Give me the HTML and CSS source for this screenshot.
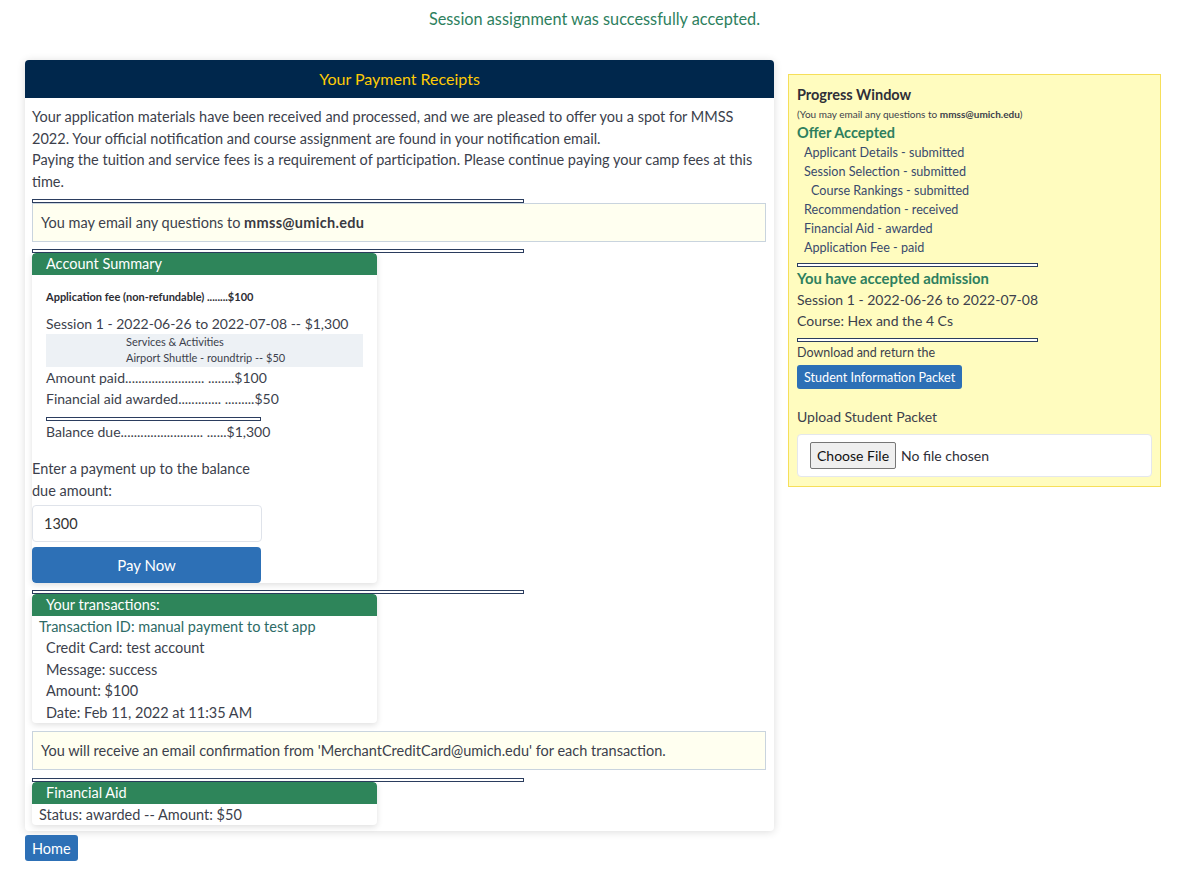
FILE: index.html
```html
<!DOCTYPE html>
<html lang="en">
<head>
<meta charset="utf-8">
<title>Your Payment Receipts</title>
<link rel="stylesheet" href="styles.css">
</head>
<body>
<div class="flash">Session assignment was successfully accepted.</div>
<div class="layout">
  <div class="main-col">
    <section class="receipts">
      <h2 class="receipts-head">Your Payment Receipts</h2>
      <div class="receipts-body">
        <p class="intro">Your application materials have been received and processed, and we are pleased to offer you a spot for MMSS 2022. Your official notification and course assignment are found in your notification email.<br>Paying the tuition and service fees is a requirement of participation. Please continue paying your camp fees at this time.</p>
        <hr class="rule">
        <div class="note">You may email any questions to <b>mmss@umich.edu</b></div>
        <hr class="rule">
        <div class="mini-card">
          <div class="mini-head">Account Summary</div>
          <div class="summary">
            <div class="app-fee">Application fee (non-refundable) ........$100</div>
            <div class="line session">Session 1 - 2022-06-26 to 2022-07-08 -- $1,300</div>
            <div class="services">
              <div>Services &amp; Activities</div>
              <div>Airport Shuttle - roundtrip -- $50</div>
            </div>
            <div class="line">Amount paid........................ ........$100</div>
            <div class="line">Financial aid awarded............. .........$50</div>
            <hr class="rule">
            <div class="line">Balance due......................... ......$1,300</div>
          </div>
          <form class="pay-form">
            <label class="pay-label" for="amt">Enter a payment up to the balance due amount:</label>
            <input id="amt" class="pay-input" type="text" value="1300">
            <button type="button" class="pay-btn">Pay Now</button>
          </form>
        </div>
        <hr class="rule">
        <div class="mini-card">
          <div class="mini-head">Your transactions:</div>
          <div class="tx">
            <div class="tx-id">Transaction ID: manual payment to test app</div>
            <div class="tx-line">Credit Card: test account</div>
            <div class="tx-line">Message: success</div>
            <div class="tx-line">Amount: $100</div>
            <div class="tx-line">Date: Feb 11, 2022 at 11:35 AM</div>
          </div>
        </div>
        <div class="note note-tx">You will receive an email confirmation from 'MerchantCreditCard@umich.edu' for each transaction.</div>
        <hr class="rule">
        <div class="mini-card">
          <div class="mini-head">Financial Aid</div>
          <div class="aid">Status: awarded -- Amount: $50</div>
        </div>
      </div>
    </section>
    <button type="button" class="home-btn">Home</button>
  </div>
  <aside class="progress">
    <div class="p-title">Progress Window</div>
    <div class="p-sub">(You may email any questions to <b>mmss@umich.edu</b>)</div>
    <div class="p-green">Offer Accepted</div>
    <ul class="p-list">
      <li>Applicant Details - submitted</li>
      <li>Session Selection - submitted</li>
      <li class="sub">Course Rankings - submitted</li>
      <li>Recommendation - received</li>
      <li>Financial Aid - awarded</li>
      <li>Application Fee - paid</li>
    </ul>
    <hr class="rule rule-first">
    <div class="p-green p-green2">You have accepted admission</div>
    <div class="p-line">Session 1 - 2022-06-26 to 2022-07-08</div>
    <div class="p-line">Course: Hex and the 4 Cs</div>
    <hr class="rule">
    <div class="p-small">Download and return the</div>
    <button type="button" class="packet-btn">Student Information Packet</button>
    <div class="p-line upload-label">Upload Student Packet</div>
    <label class="file-box"><span class="file-btn">Choose File</span><span class="file-none">No file chosen</span></label>
  </aside>
</div>
</body>
</html>
```

FILE: styles.css
```css
* { box-sizing: border-box; }
body {
  margin: 0;
  font-family: Lato, "Segoe UI", "Open Sans", sans-serif;
  font-size: 14.5px;
  color: #3c3f4c;
  background: #fff;
}
.flash {
  text-align: center;
  color: #2e7f5e;
  font-size: 16.3px;
  line-height: 22px;
  padding-top: 8px;
  height: 60px;
}
.layout {
  display: flex;
  align-items: flex-start;
  gap: 14px;
  padding-left: 25px;
}
.main-col { width: 749px; }
.receipts {
  background: #fff;
  border-radius: 4px;
  box-shadow: 0 1px 8px rgba(0,0,0,0.14);
}
.receipts-head {
  margin: 0;
  height: 38px;
  line-height: 38px;
  background: #00274c;
  color: #ffcb05;
  text-align: center;
  font-weight: normal;
  font-size: 16px;
  border-radius: 4px 4px 0 0;
}
.receipts-body { padding: 8px 8px 6px 7px; }
.intro { margin: 0 0 6px; line-height: 21.7px; font-size: 14.5px; }
.rule {
  width: 67%;
  height: 4px;
  margin: 0;
  border: 1px solid #2b3d5e;
  background: #fff;
}
.note {
  background: #fffff0;
  border: 1px solid #c9d4de;
  padding: 8px 8px;
  line-height: 21px;
  font-size: 14.5px;
  margin-bottom: 7px;
}
.note b { color: #3a3a42; letter-spacing: 0.3px; }
.note-tx { margin-top: 8px; margin-bottom: 8px; }
.mini-card {
  width: 345px;
  background: #fff;
  border-radius: 4px;
  box-shadow: 0 2px 6px rgba(0,0,0,0.13);
  margin-bottom: 7px;
  overflow: hidden;
}
.mini-head {
  background: #2e855a;
  color: #fff;
  height: 22px;
  line-height: 22px;
  padding-left: 14px;
  font-size: 14.5px;
  border-radius: 4px 4px 0 0;
}
.summary { padding: 14px 14px 0 14px; }
.app-fee { font-size: 11px; font-weight: bold; line-height: 16px; color: #2d2d33; }
.line { line-height: 21px; font-size: 14px; }
.line.session { margin-top: 9px; line-height: 20px; }
.services {
  background: #edf1f5;
  font-size: 11px;
  line-height: 16.5px;
  padding-left: 80px;
}
.summary .rule { width: 215px; margin: 8px 0 0; }
.pay-form { width: 230px; padding: 16px 0 0; }
.pay-label { display: block; line-height: 22px; font-size: 14.5px; }
.pay-input {
  display: block;
  width: 230px;
  height: 37px;
  margin-top: 3px;
  border: 1px solid #dfe3ea;
  border-radius: 4px;
  padding: 0 11px;
  font: inherit;
  font-size: 14.5px;
  color: #333;
}
.pay-btn {
  display: block;
  width: 229px;
  height: 36px;
  margin-top: 5px;
  background: #2d70b6;
  color: #fff;
  border: 0;
  border-radius: 4px;
  font: inherit;
  font-size: 15px;
}
.tx { font-size: 14.5px; line-height: 21.5px; }
.tx-id { padding-left: 7px; color: #2d6b66; }
.tx-line { padding-left: 14px; }
.aid { padding-left: 7px; font-size: 14.5px; line-height: 21px; }
.receipts-body > .mini-card:last-child { margin-bottom: 0; }
.home-btn {
  display: block;
  margin-top: 4px;
  height: 26px;
  padding: 0 7px;
  background: #2d70b6;
  color: #fff;
  border: 0;
  border-radius: 3px;
  font: inherit;
  font-size: 14.5px;
}
.progress {
  width: 373px;
  margin-top: 14px;
  background: #fffcbf;
  border: 1px solid #f6df5a;
  padding: 10px 8px 9px 8px;
  font-size: 14px;
}
.p-title { font-weight: bold; line-height: 20px; font-size: 14.5px; color: #2f2f38; }
.p-sub { font-size: 10px; line-height: 18px; }
.p-green { color: #2e7f5e; font-weight: bold; font-size: 14.5px; line-height: 20px; }
.p-list { list-style: none; margin: 0; padding: 0 0 0 7px; font-size: 12.6px; line-height: 19px; color: #394a6d; }
.p-list .sub { padding-left: 7px; }
.progress .rule { margin-top: 7px; width: 241px; }
.progress .rule-first { margin-top: 6px; }
.p-green2 { line-height: 22px; font-size: 14.8px; }
.p-line { line-height: 21px; font-size: 14px; }
.p-small { font-size: 12.5px; line-height: 18px; margin-top: 2px; }
.packet-btn {
  display: block;
  margin-top: 3px;
  height: 24px;
  padding: 0 7px;
  background: #2d70b6;
  color: #fff;
  border: 0;
  border-radius: 3px;
  font: inherit;
  font-size: 12.6px;
}
.upload-label { margin-top: 17px; }
.file-box {
  display: flex;
  align-items: center;
  margin-top: 7px;
  height: 43px;
  background: #fff;
  border: 1px solid #e4e7ec;
  border-radius: 4px;
  padding-left: 12px;
  font-size: 14px;
}
.file-btn {
  display: inline-block;
  height: 27px;
  line-height: 25px;
  padding: 0 6px;
  background: #efefef;
  border: 1px solid #767676;
  border-radius: 2px;
  color: #111;
  margin-right: 5px;
}
.file-none { color: #2f2f38; }
```
